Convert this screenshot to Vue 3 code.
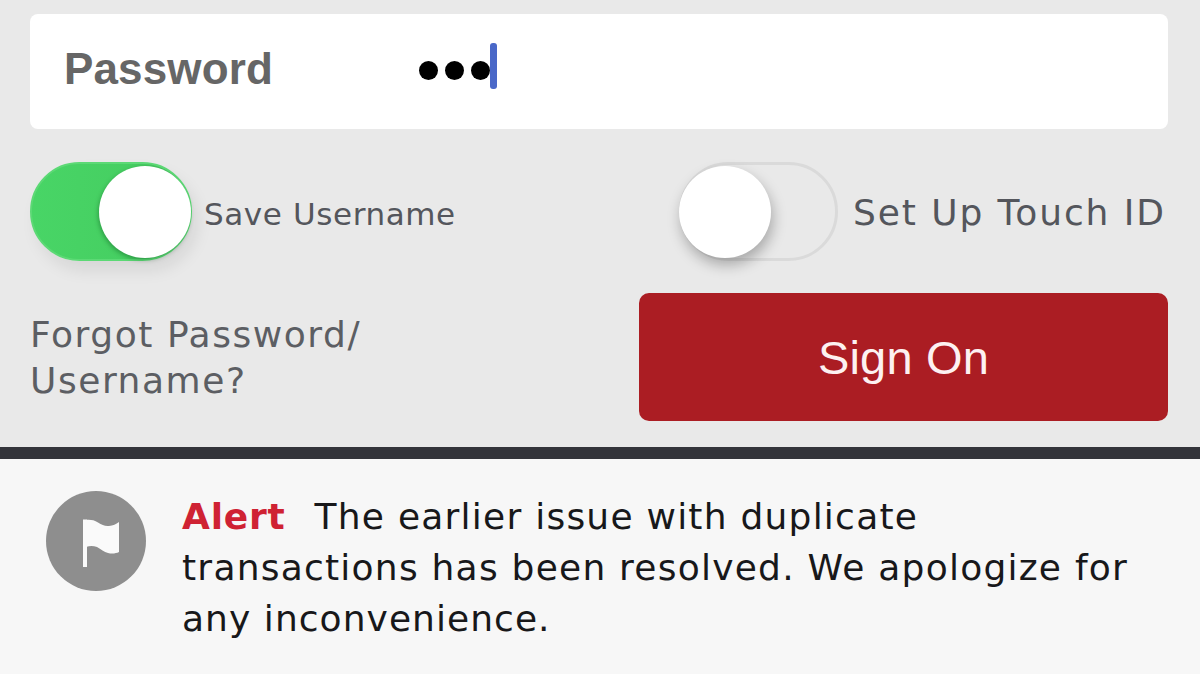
<script setup>
const dots = [0, 1, 2]
</script>

<template>
  <div class="screen">
    <section class="panel">
      <div class="field">
        <span class="field-label">Password</span>
        <span class="dots">
          <i v-for="d in dots" :key="d" class="dot"></i>
        </span>
        <span class="caret"></span>
      </div>

      <div class="grid toggles">
        <div class="toggle-row">
          <div class="switch on"><span class="knob"></span></div>
          <span class="save">Save Username</span>
        </div>
        <div class="toggle-row right">
          <div class="switch off"><span class="knob"></span></div>
          <span class="touch">Set Up Touch ID</span>
        </div>
      </div>

      <div class="grid actions">
        <a class="forgot">Forgot Password/<br />Username?</a>
        <button class="sign-on">Sign On</button>
      </div>
    </section>

    <div class="divider"></div>

    <section class="alert">
      <div class="alert-icon">
        <svg viewBox="0 0 100 100" width="100" height="100">
          <path d="M37 28.500h4v47.500h-4z" fill="#fafafa" />
          <path d="M40 29c4-.5 8 0 12 2.500 4 2.500 7 4 11 3.500 4-.5 7-1.500 10-4v30c-3 1.500-7 2-11 1-4-1-7-4-11-6-4-1.500-7-1.500-11 0z" fill="#fafafa" />
        </svg>
      </div>
      <p class="alert-text"><strong>Alert</strong><span class="gap"></span>The earlier issue with duplicate<br />transactions has been resolved. We apologize for<br /><span class="last">any inconvenience.</span></p>
    </section>
  </div>
</template>

<style scoped>
.screen {
  width: 1200px;
  height: 674px;
  overflow: hidden;
  display: flex;
  flex-direction: column;
  background: #f7f7f7;
}
.panel {
  height: 447px;
  box-sizing: border-box;
  padding: 14px 32px 0 30px;
  background: #e9e9e9;
}
.field {
  height: 115px;
  display: flex;
  align-items: center;
  background: #fff;
  border-radius: 8px;
  padding-left: 34px;
}
.field-label {
  width: 355px;
  margin-top: -5px;
  font: bold 44px "Liberation Sans", Arial, sans-serif;
  letter-spacing: 0.15px;
  color: #666;
}
.dots {
  display: flex;
  gap: 7px;
  margin-top: -3px;
}
.dot {
  width: 19px;
  height: 19px;
  border-radius: 50%;
  background: #000;
}
.caret {
  width: 7px;
  height: 46px;
  border-radius: 3px;
  background: #4a68c8;
  margin: -12px 0 0 0;
}
.grid {
  display: grid;
  grid-template-columns: 609px 529px;
}
.toggles {
  margin-top: 33px;
  height: 99px;
}
.toggle-row {
  display: flex;
  align-items: center;
}
.toggle-row.right {
  padding-left: 40px;
}
.switch {
  position: relative;
  box-sizing: border-box;
  width: 162px;
  height: 99px;
  border-radius: 50px;
  flex: none;
}
.switch.on {
  background: linear-gradient(90deg, #48d566 0%, #46cf62 60%, #45b65c 100%);
  border: 2px solid #5cd975;
  box-shadow: 6px 10px 16px rgba(0, 0, 0, 0.08);
}
.switch.off {
  width: 159px;
  border: 3px solid #dadada;
  background: #e9e9e9;
}
.knob {
  position: absolute;
  width: 92px;
  height: 92px;
  border-radius: 50%;
  background: #fff;
}
.on .knob {
  right: -1px;
  top: 2px;
  box-shadow: -1px 2px 4px rgba(0, 70, 20, 0.35);
}
.off .knob {
  left: -3px;
  top: 1px;
  box-shadow: 2px 7px 14px rgba(0, 0, 0, 0.28);
}
.save {
  margin: 4px 0 0 12px;
  font: 31px "DejaVu Sans", Verdana, sans-serif;
  letter-spacing: 0.6px;
  color: #54565c;
}
.touch {
  margin: 1px 0 0 15px;
  font: 36px "DejaVu Sans", Verdana, sans-serif;
  letter-spacing: 1.9px;
  color: #54565c;
  white-space: nowrap;
}
.actions {
  margin-top: 32px;
  height: 128px;
}
.forgot {
  font: 36px/46px "DejaVu Sans", Verdana, sans-serif;
  letter-spacing: 1.55px;
  color: #5c5e63;
  padding-top: 19px;
}
.sign-on {
  border: none;
  border-radius: 10px;
  background: #ab1d23;
  color: #fdf1f1;
  font: 47px "Liberation Sans", Arial, sans-serif;
  letter-spacing: 0.2px;
  padding: 0;
}
.divider {
  height: 12px;
  background: #33343a;
}
.alert {
  flex: 1;
  display: flex;
  align-items: flex-start;
  padding: 32px 0 0 46px;
  background: #f7f7f7;
}
.alert-icon {
  width: 100px;
  height: 100px;
  border-radius: 50%;
  background: #8e8e8e;
  flex: none;
}
.alert-icon svg {
  display: block;
}
.alert-text {
  margin: 0 0 0 36px;
  font: 36px/51px "DejaVu Sans", Verdana, sans-serif;
  letter-spacing: 1.23px;
  color: #18181a;
  white-space: nowrap;
}
.alert-text strong {
  color: #cf2233;
  letter-spacing: 0.8px;
}
.gap {
  display: inline-block;
  width: 29px;
}
.last {
  letter-spacing: 1.05px;
}
</style>
